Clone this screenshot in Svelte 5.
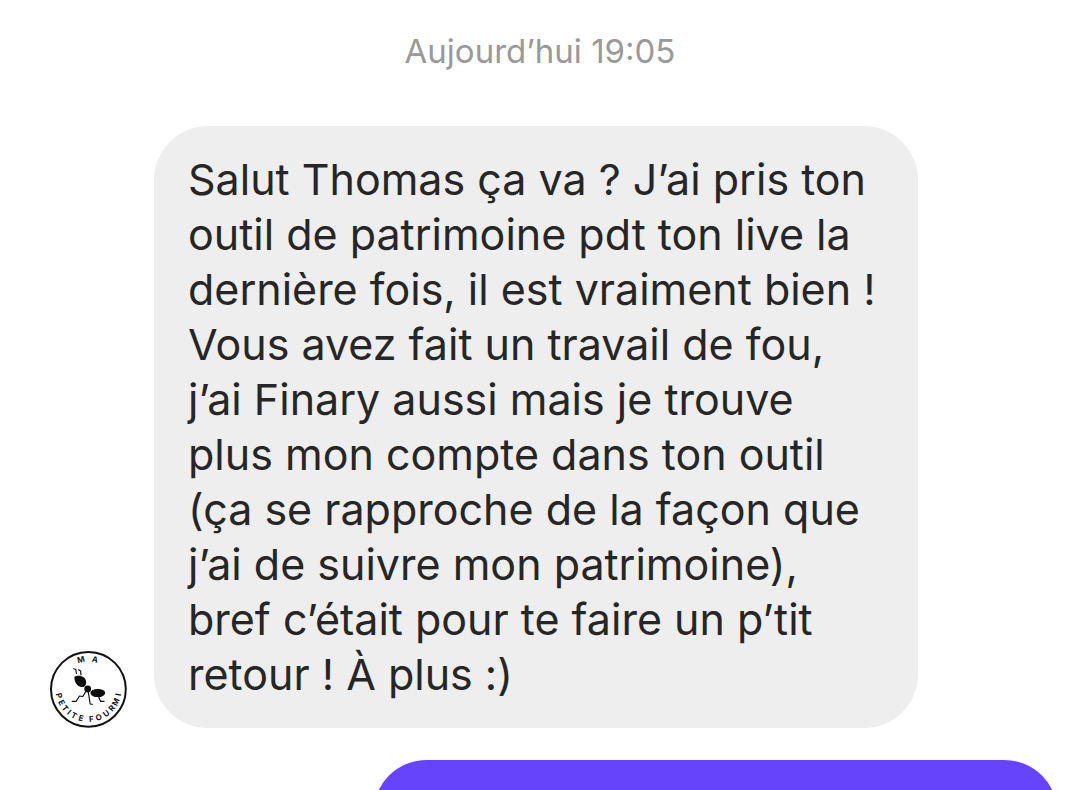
<script>
  const message = `Salut Thomas ça va ? J’ai pris ton
outil de patrimoine pdt ton live la
dernière fois, il est vraiment bien !
Vous avez fait un travail de fou,
j’ai Finary aussi mais je trouve
plus mon compte dans ton outil
(ça se rapproche de la façon que
j’ai de suivre mon patrimoine),
bref c’était pour te faire un p’tit
retour ! À plus :)`;

  // Letters of the round emblem, with their place along each arc in percent.
  const top = [['M', 42], ['A', 57]];
  const bottom = [
    ['P', 7], ['E', 15], ['T', 22], ['I', 28], ['T', 34], ['E', 42],
    ['F', 53], ['O', 61], ['U', 70], ['R', 78], ['M', 86], ['I', 94]
  ];
</script>

<main class="chat">
  <time class="stamp">Aujourd’hui 19:05</time>
  <article class="incoming">
    <svg class="avatar" viewBox="0 0 78 78" role="img" aria-label="Ma petite fourmi">
      <defs>
        <path id="arc-top" d="M11 39a27.5 27.5 0 0 1 55 0" />
        <path id="arc-bottom" d="M5.5 39a33 33 0 0 0 66 0" />
      </defs>
      <circle cx="38.4" cy="39.3" r="37.4" fill="#fff" stroke="#111" stroke-width="2" />
      <text class="ring">
        {#each top as [letter, at]}<textPath href="#arc-top" startOffset="{at}%">{letter}</textPath>{/each}
      </text>
      <text class="ring">
        {#each bottom as [letter, at]}<textPath href="#arc-bottom" startOffset="{at}%">{letter}</textPath>{/each}
      </text>
      <g fill="#0c0c0c">
        <path d="M24.300 27c2.500-1.800 7-1.400 9.700.6 2.400 2.200 2.900 5.600 1.400 7.800-1.700 2.300-5.500 2-7.900-.2-2.300-2.200-3-4.800-3.200-8.200z" />
        <circle cx="37.700" cy="39" r="3.400" />
        <ellipse cx="47.800" cy="43" rx="7.400" ry="4.100" />
      </g>
      <g fill="none" stroke="#111" stroke-width="1.200" stroke-linejoin="round">
        <path d="M23.300 18.500l2.500 1 .7 4.500M28.200 19.500l2.400 1.600.4 4.200" />
        <path d="M35.800 41.500l-3 5-3.300-.5-3.300 5.300h-4.500M38.300 42l1.900 12 2.600.4M48.500 46.500l2 4.800h4" />
      </g>
    </svg>
    <p class="bubble">{message}</p>
  </article>
  <div class="outgoing"></div>
</main>

<style>
  :global(body) { background: #fff; }
  .chat { box-sizing: border-box; height: 100vh; overflow: hidden; padding: 31px 22px 0 50px; display: flex; flex-direction: column; font-family: Inter, "Liberation Sans", sans-serif; }
  .stamp { align-self: center; margin-right: 28px; font-size: 33px; line-height: 40px; color: #999; }
  .incoming { display: flex; align-items: flex-end; gap: 26px; margin: 55px 140px 0 0; }
  .avatar { width: 78px; height: 78px; flex: none; }
  .ring { font-size: 8px; font-weight: 700; text-anchor: middle; fill: #111; }
  .bubble { flex: 1; margin: 0; padding: 26px 34px; border-radius: 54px; background: #eee; color: #262626; font-size: 43px; line-height: 55px; white-space: pre-line; }
  .outgoing { flex: none; align-self: flex-end; width: 68%; height: 110px; margin-top: 32px; border-radius: 54px; background: #6544fb; }
</style>
